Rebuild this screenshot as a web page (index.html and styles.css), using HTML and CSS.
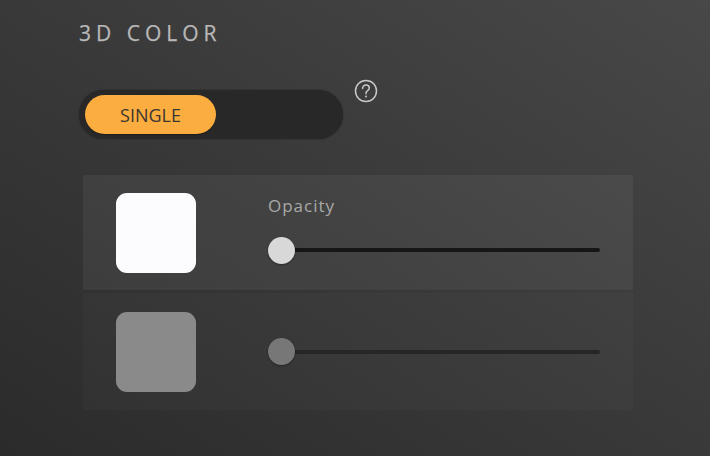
FILE: index.html
```html
<!DOCTYPE html>
<html>
<head>
<meta charset="utf-8">
<link rel="stylesheet" href="styles.css">
</head>
<body>
<div class="page">
  <h1 class="title">3D COLOR</h1>
  <div class="mode-row">
    <div class="toggle">
      <div class="toggle-on">SINGLE</div>
    </div>
    <svg class="help" width="24" height="24" viewBox="0 0 24 24">
      <circle cx="12" cy="12" r="10.5" fill="none" stroke="#c8c8c8" stroke-width="1.5"/>
      <path d="M8.6 9.4 C8.6 7.3 10.1 6.1 12 6.1 C13.9 6.1 15.3 7.3 15.3 9 C15.3 10.4 14.4 11.1 13.4 11.8 C12.5 12.4 12 13 12 14.2 L12 14.8" fill="none" stroke="#c8c8c8" stroke-width="1.5" stroke-linecap="round"/>
      <circle cx="12" cy="17.6" r="1" fill="#c8c8c8"/>
    </svg>
  </div>
  <div class="rows">
    <div class="row row-a">
      <div class="swatch swatch-white"></div>
      <div class="controls">
        <div class="label">Opacity</div>
        <div class="slider">
          <div class="track track-a"></div>
          <div class="thumb thumb-a"></div>
        </div>
      </div>
    </div>
    <div class="row row-b">
      <div class="swatch swatch-grey"></div>
      <div class="controls">
        <div class="slider">
          <div class="track track-b"></div>
          <div class="thumb thumb-b"></div>
        </div>
      </div>
    </div>
  </div>
</div>
</body>
</html>
```

FILE: styles.css
```css
html, body {
  margin: 0;
  padding: 0;
  width: 710px;
  height: 456px;
  overflow: hidden;
}
body {
  background: linear-gradient(to top right, #2b2b2b 0%, #393939 50%, #484848 100%);
  font-family: "Open Sans", "Liberation Sans", sans-serif;
}
.page {
  display: flex;
  flex-direction: column;
  padding: 19px 0 0 79px;
}
.title {
  margin: 0;
  font-size: 21px;
  font-weight: 400;
  letter-spacing: 5px;
  color: #b8b8b8;
  line-height: 28px;
  -webkit-text-stroke: 0.25px #b8b8b8;
}
.mode-row {
  display: flex;
  align-items: flex-start;
  margin-top: 32px;
}
.toggle {
  width: 264px;
  height: 49px;
  margin-top: 11px;
  box-sizing: border-box;
  padding: 5px 6px;
  background: #282828;
  border-radius: 25px;
  box-shadow: 0 0 2px rgba(0,0,0,0.35);
}
.toggle-on {
  width: 131px;
  height: 39px;
  border-radius: 20px;
  background: #fbad3f;
  color: #3a3630;
  font-size: 18px;
  display: flex;
  align-items: center;
  justify-content: center;
  box-shadow: 0 1px 1px rgba(0,0,0,0.3);
}
.help {
  margin-left: 11px;
  margin-top: 0;
}
.rows {
  display: flex;
  flex-direction: column;
  gap: 3px;
  width: 550px;
  margin-top: 36px;
  margin-left: 4px;
}
.row {
  display: flex;
  align-items: center;
  height: 115px;
  padding: 0 33px;
  gap: 72px;
}
.row-a {
  background: rgba(255,255,255,0.055);
  height: 115px;
}
.row-b {
  background: rgba(255,255,255,0.025);
  height: 117px;
}
.swatch {
  width: 80px;
  height: 80px;
  border-radius: 11px;
  flex: none;
}
.swatch-white {
  background: #fcfcfe;
}
.swatch-grey {
  background: #8a8a8a;
}
.controls {
  flex: 1;
  display: flex;
  flex-direction: column;
}
.label {
  font-size: 17px;
  letter-spacing: 1px;
  color: #a9a9a9;
  line-height: 22px;
  margin-bottom: 20px;
  margin-top: -7px;
}
.slider {
  position: relative;
  height: 27px;
  display: flex;
  align-items: center;
}
.track {
  flex: 1;
  height: 4px;
  border-radius: 2px;
  margin-left: 12px;
}
.track-a {
  background: #161616;
}
.track-b {
  background: #262626;
}
.thumb {
  position: absolute;
  left: 0;
  top: 0;
  width: 27px;
  height: 27px;
  border-radius: 50%;
  box-shadow: 0 1px 2px rgba(0,0,0,0.35);
}
.thumb-a {
  background: #d8d8d8;
}
.thumb-b {
  background: #777777;
}
```
